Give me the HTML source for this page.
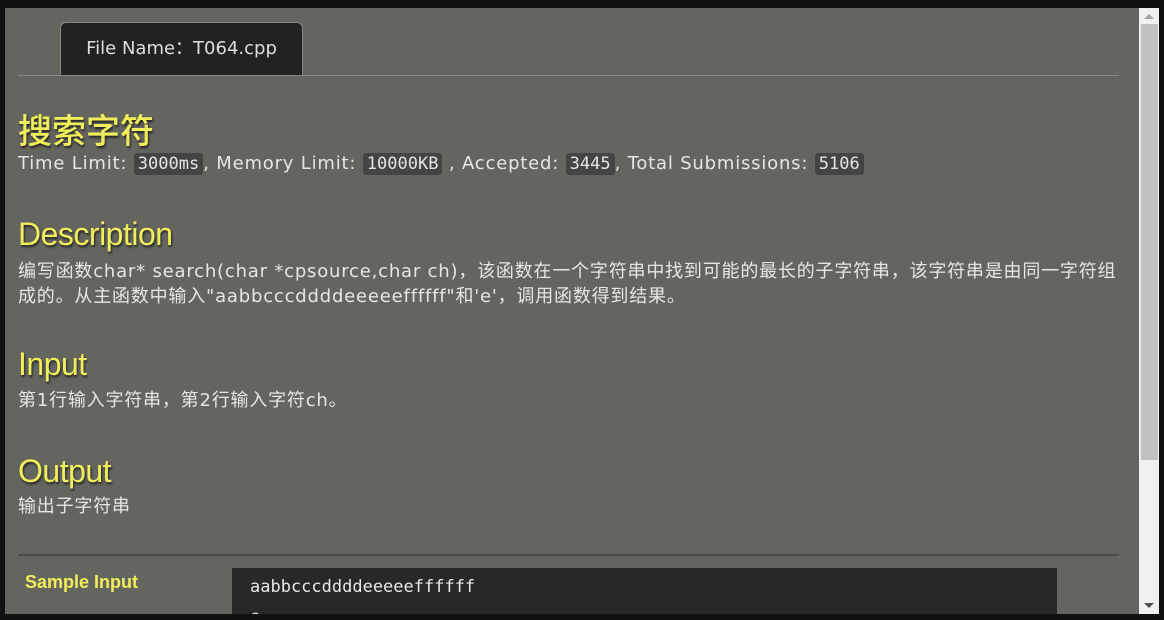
<!DOCTYPE html>
<html><head><meta charset="utf-8"><style>
html,body{margin:0;padding:0;}
body{width:1164px;height:620px;background:#111;position:relative;overflow:hidden;font-family:"DejaVu Sans","Noto Sans CJK SC",sans-serif;}
#pg{position:absolute;left:5px;top:8px;width:1134px;height:606px;background:#656560;overflow:hidden;}
#sb{position:absolute;left:1139px;top:8px;width:20px;height:606px;background:#f0f0f0;}
#thumb{position:absolute;left:2px;top:16px;width:17px;height:436px;background:#c1c1c1;}
.up,.dn{position:absolute;left:5px;width:0;height:0;border-left:5px solid transparent;border-right:5px solid transparent;}
.up{top:6px;border-bottom:5px solid #a3a3a3;}
.dn{bottom:6px;border-top:5px solid #505050;}
.tab{position:absolute;left:55px;top:14px;width:243px;height:53px;background:#222;border:1px solid #888;border-bottom:none;border-radius:6px 6px 0 0;color:#ddd;font-size:18px;line-height:52px;text-align:center;box-sizing:border-box;}
.hr{position:absolute;left:13px;width:1101px;height:1px;background:#8a8a85;}
h1,h2{position:absolute;left:13px;margin:0;color:#f0ee5a;font-weight:normal;text-shadow:1px 2px 2px #222;}
h1{font-size:34px;top:98px;font-family:"Noto Sans CJK SC",sans-serif;font-weight:500;line-height:46px;}
h2{font-size:32px;font-family:"Liberation Sans",sans-serif;letter-spacing:-0.5px;}
.t{position:absolute;left:13px;color:#e6e6e6;font-size:18px;line-height:25px;width:1115px;white-space:nowrap;letter-spacing:0.8px;}
code{font-family:"DejaVu Sans Mono","Liberation Mono",monospace;background:#444;color:#e4e4e4;border-radius:3px;padding:1px 4px;font-size:17px;letter-spacing:0;}
.si{position:absolute;left:20px;top:564px;color:#f0ee5a;font-weight:bold;font-size:18px;font-family:"Liberation Sans",sans-serif;}
.pre{position:absolute;left:227px;top:560px;width:825px;height:60px;background:#282828;color:#e8e8e8;font-family:"DejaVu Sans Mono",monospace;font-size:17px;padding:4px 18px;box-sizing:border-box;line-height:30px;}
</style></head><body>
<div id="pg">
<div class="tab">File Name：T064.cpp</div>
<div class="hr" style="top:67px"></div>
<h1>搜索字符</h1>
<div class="t" style="top:143px">Time Limit: <code>3000ms</code>, Memory Limit: <code>10000KB</code> , Accepted: <code>3445</code>, Total Submissions: <code>5106</code></div>
<h2 style="top:208px">Description</h2>
<div class="t" style="top:251px">编写函数char* search(char *cpsource,char ch)，该函数在一个字符串中找到可能的最长的子字符串，该字符串是由同一字符组<br>成的。从主函数中输入"aabbcccddddeeeeeffffff"和'e'，调用函数得到结果。</div>
<h2 style="top:338px">Input</h2>
<div class="t" style="top:380px">第1行输入字符串，第2行输入字符ch。</div>
<h2 style="top:445px">Output</h2>
<div class="t" style="top:486px">输出子字符串</div>
<div class="hr" style="top:546px;background:#4a4a46;height:2px"></div>
<div class="si">Sample Input</div>
<div class="pre">aabbcccddddeeeeeffffff<br>e</div>
</div>
<div id="sb"><div class="up"></div><div id="thumb"></div><div class="dn"></div></div>
</body></html>
